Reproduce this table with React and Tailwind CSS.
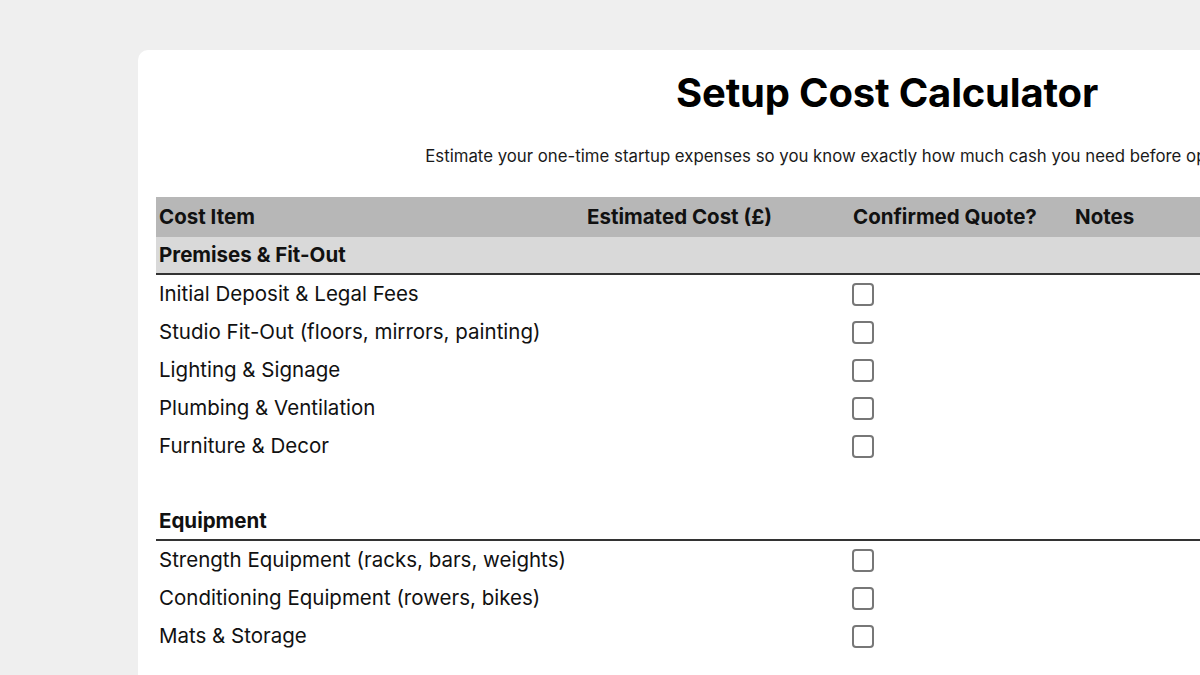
import React from 'react';

const sections = [
  {
    name: 'Premises & Fit-Out',
    shaded: true,
    items: [
      'Initial Deposit & Legal Fees',
      'Studio Fit-Out (floors, mirrors, painting)',
      'Lighting & Signage',
      'Plumbing & Ventilation',
      'Furniture & Decor',
    ],
  },
  {
    name: 'Equipment',
    shaded: false,
    items: [
      'Strength Equipment (racks, bars, weights)',
      'Conditioning Equipment (rowers, bikes)',
      'Mats & Storage',
    ],
  },
];

function Box() {
  return <span className="block w-[22px] h-[23px] ml-[2px] rounded-[4px] border-2 border-[#777] bg-white" />;
}

function Row({ children, className = '' }) {
  return (
    <div className={`grid grid-cols-[428px_266px_222px_1fr] items-center ${className}`}>
      {children}
    </div>
  );
}

export default function App() {
  return (
    <div
      className="w-[1200px] h-[675px] overflow-hidden bg-[#efefef] pl-[138px] pt-[50px]"
      style={{ fontFamily: 'Inter, "Noto Sans", sans-serif' }}
    >
      <div className="w-[1498px] h-[700px] bg-white rounded-tl-[10px] px-[18px]">
        <h1 className="text-center text-[40px] leading-none font-bold text-black pt-[23px] tracking-[-0.2px]">
          Setup Cost Calculator
        </h1>
        <p className="text-center text-[16.8px] leading-[24px] text-[#1a1a1a] mt-[31px]">
          Estimate your one-time startup expenses so you know exactly how much cash you need before opening your studio.
        </p>

        <div className="mt-[29px] text-[20.5px] text-[#111]">
          <Row className="h-[40px] bg-[#b7b7b7] font-bold">
            <span className="pl-[3px]">Cost Item</span>
            <span className="pl-[3px]">Estimated Cost (£)</span>
            <span className="pl-[3px]">Confirmed Quote?</span>
            <span className="pl-[3px]">Notes</span>
          </Row>

          {sections.map((s, i) => (
            <div key={s.name}>
              {i > 0 && <div className="h-[38px]" />}
              <div
                className={`h-[38px] flex items-center pl-[3px] font-bold border-b-2 border-[#333] ${
                  s.shaded ? 'bg-[#d9d9d9]' : ''
                }`}
              >
                {s.name}
              </div>
              {s.items.map((item) => (
                <Row key={item} className="h-[38px]">
                  <span className="pl-[3px]">{item}</span>
                  <span />
                  <Box />
                  <span />
                </Row>
              ))}
            </div>
          ))}
        </div>
      </div>
    </div>
  );
}
